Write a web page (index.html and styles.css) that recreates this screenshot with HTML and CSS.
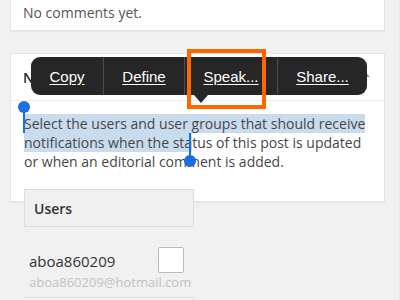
FILE: index.html
```html
<!DOCTYPE html>
<html lang="en">
<head>
    <meta charset="UTF-8">
    <meta name="viewport" content="width=device-width, initial-scale=1.0">
    <title>Notifications</title>
    <link rel="stylesheet" href="styles.css">
</head>
<body>
    <div class="page">
        <div class="card comments">
            <p>No comments yet.</p>
        </div>

        <div class="card notify">
            <div class="card-header">
                <h2>Notifications</h2>
                <span class="toggle"></span>
            </div>
            <div class="card-body">
                <p class="intro"><span class="selected">Select the users and user groups that should receive notifications when the sta</span>tus of this post is updated or when an editorial comment is added.</p>
                <span class="handle handle-start"></span>
                <span class="handle handle-end"></span>
            </div>

            <!-- iOS callout menu -->
            <div class="callout">
                <a class="item item-copy">Copy</a>
                <a class="item item-define">Define</a>
                <a class="item item-speak">Speak...</a>
                <a class="item item-share">Share...</a>
                <span class="callout-arrow"></span>
            </div>
            <div class="highlight-box"></div>
        </div>

        <div class="users">
            <div class="users-head">Users</div>
            <div class="user-row">
                <div class="user-info">
                    <div class="user-name">aboa860209</div>
                    <div class="user-mail">aboa860209@hotmail.com</div>
                </div>
                <span class="check"></span>
            </div>
        </div>
    </div>
</body>
</html>
```

FILE: styles.css
```css
body {
    margin: 0;
    padding: 0;
    background-color: #f1f1f1;
    font-family: "Open Sans", sans-serif;
    color: #444;
    overflow: hidden;
}

.page {
    width: 400px;
    height: 300px;
    border-right: 1px solid #e8e8e8;
    box-sizing: border-box;
}

.card {
    margin: 0 14px 0 10px;
    background-color: #fff;
    border: 1px solid #e5e5e5;
    box-shadow: 0 1px 1px rgba(0, 0, 0, 0.04);
}

.comments {
    border-top: none;
    padding: 3px 12px 7px;
}

.comments p {
    margin: 0;
    font-size: 14px;
    line-height: 20px;
    color: #555;
}

.notify {
    position: relative;
    margin-top: 22px;
}

.card-header {
    display: flex;
    align-items: center;
    justify-content: space-between;
    height: 46px;
    padding: 0 14px 0 12px;
    border-bottom: 1px solid #eee;
}

.card-header h2 {
    margin: 0;
    font-size: 14px;
    font-weight: 600;
    color: #23282d;
}

.toggle {
    width: 0;
    height: 0;
    border-left: 5px solid transparent;
    border-right: 5px solid transparent;
    border-bottom: 6px solid #999;
    margin-top: -6px;
}

.card-body {
    position: relative;
    padding: 13px 16px 30px 13px;
}

.intro {
    margin: 0;
    font-size: 14px;
    line-height: 19px;
    color: #474747;
}

.selected {
    background-color: #c9dcee;
}

.handle {
    position: absolute;
    width: 2px;
    height: 26px;
    background-color: #1a6fe0;
}

.handle::after {
    content: "";
    position: absolute;
    left: -5px;
    width: 12px;
    height: 12px;
    border-radius: 50%;
    background-color: #1a6fe0;
}

.handle-start {
    left: 12px;
    top: 6px;
}

.handle-start::after {
    top: -6px;
}

.handle-end {
    left: 178px;
    top: 32px;
}

.handle-end::after {
    bottom: -8px;
}

.callout {
    position: absolute;
    left: 20px;
    top: 3px;
    display: flex;
    height: 38px;
    background-color: #262626;
    border-radius: 9px;
    font-family: "Liberation Sans", Arial, sans-serif;
    font-size: 15px;
}

.item {
    display: flex;
    align-items: center;
    justify-content: center;
    color: #fff;
    text-decoration: underline;
    text-underline-offset: 2px;
    border-left: 1px solid #4c4c4c;
}

.item-copy {
    width: 72px;
    border-left: none;
}

.item-define {
    width: 80px;
}

.item-speak {
    width: 92px;
}

.item-share {
    width: 89px;
}

.callout-arrow {
    position: absolute;
    left: 163px;
    bottom: -8px;
    width: 0;
    height: 0;
    border-left: 7px solid transparent;
    border-right: 7px solid transparent;
    border-top: 8px solid #262626;
}

.highlight-box {
    position: absolute;
    left: 176px;
    top: -5px;
    width: 71px;
    height: 52px;
    border: 4px solid #ff6600;
}

.users {
    position: relative;
    width: 170px;
    margin: -13px 0 0 24px;
}

.users-head {
    height: 36px;
    padding-left: 9px;
    display: flex;
    align-items: center;
    background-color: #f0f0f0;
    border: 1px solid #ddd;
    font-size: 14px;
    font-weight: 600;
    color: #333;
}

.user-row {
    display: flex;
    align-items: flex-start;
    justify-content: space-between;
    padding: 20px 10px 6px 5px;
    border-bottom: 1px solid #ddd;
}

.user-info {
    min-width: 0;
    white-space: nowrap;
}

.user-name {
    font-size: 15px;
    line-height: 22px;
    color: #333;
    margin-top: 3px;
}

.user-mail {
    font-size: 13px;
    line-height: 18px;
    color: #c2c2c2;
    margin-top: 1px;
}

.check {
    flex-shrink: 0;
    width: 24px;
    height: 24px;
    background-color: #fff;
    border: 1px solid #bbb;
    border-radius: 2px;
}
```
